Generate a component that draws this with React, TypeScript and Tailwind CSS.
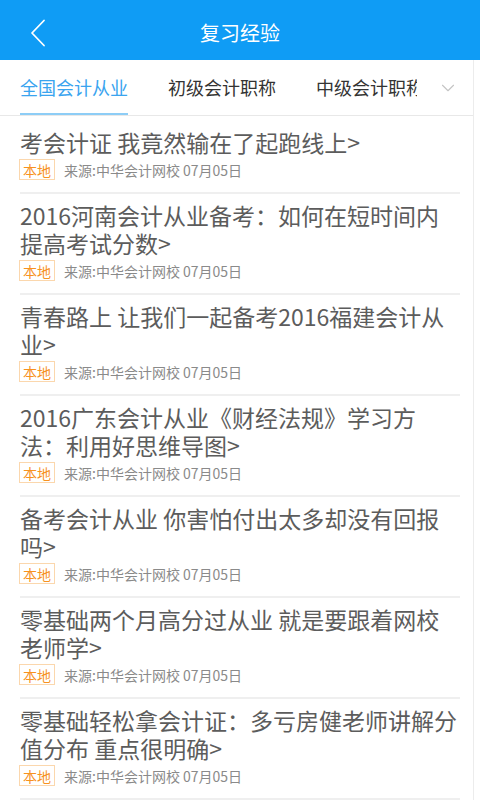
import { ChevronDown } from 'lucide-react'

const TABS = ['全国会计从业', '初级会计职称', '中级会计职称']

const ARTICLES: string[][] = [
  ['考会计证 我竟然输在了起跑线上>'],
  ['2016河南会计从业备考：如何在短时间内', '提高考试分数>'],
  ['青春路上 让我们一起备考2016福建会计从', '业>'],
  ['2016广东会计从业《财经法规》学习方', '法：利用好思维导图>'],
  ['备考会计从业 你害怕付出太多却没有回报', '吗>'],
  ['零基础两个月高分过从业 就是要跟着网校', '老师学>'],
  ['零基础轻松拿会计证：多亏房健老师讲解分', '值分布 重点很明确>'],
]

export default function App() {
  return (
    <div
      className="w-[480px] h-[800px] overflow-hidden bg-white flex flex-col"
      style={{ fontFamily: '"Noto Sans CJK SC", "Noto Sans", sans-serif' }}
    >
      {/* Header */}
      <div className="h-[60px] flex-shrink-0 bg-[#0f9cf5] flex items-center relative pt-[6px]">
        <button className="w-[60px] h-full flex items-center pl-[30px] text-white" aria-label="返回">
          <svg width="16" height="28" viewBox="0 0 16 28" fill="none" stroke="currentColor" strokeWidth="1.8" strokeLinecap="round" strokeLinejoin="round">
            <path d="M14 1.5L2 14l12 12.5" />
          </svg>
        </button>
        <h1 className="absolute left-1/2 -translate-x-1/2 text-white text-[20px] leading-none">复习经验</h1>
      </div>

      <div className="flex-1 flex min-h-0">
        <div className="w-[474px] border-r border-[#ececec] flex flex-col min-h-0">
          {/* Tabs */}
          <div className="h-[56px] flex-shrink-0 flex border-b border-[#e8e8e8]">
            <div className="flex-1 overflow-hidden flex pl-[20px] gap-[40px] whitespace-nowrap">
              {TABS.map((t, i) => (
                <div
                  key={t}
                  className={
                    i === 0
                      ? 'h-full flex items-center text-[18px] text-[#3aa4ef] border-b-2 border-[#8dcdf6] pt-[2px] flex-shrink-0'
                      : 'h-full flex items-center text-[18px] text-[#333] flex-shrink-0'
                  }
                >
                  {t}
                </div>
              ))}
            </div>
            <div className="w-[56px] flex items-center pl-[20px] text-[#c4c4c4]">
              <ChevronDown className="w-[22px] h-[22px]" strokeWidth={1.2} />
            </div>
          </div>

          {/* List */}
          <div className="flex-1 overflow-hidden pt-[5px]">
            {ARTICLES.map((lines, i) => (
              <div key={i} className="mx-[20px] w-[440px] pt-[7px] pb-[12px] border-b-2 border-[#efefef]">
                <div className="text-[23px] leading-[28px] text-[#5c5c5c]">
                  {lines.map(l => (
                    <div key={l} className="whitespace-nowrap">{l}</div>
                  ))}
                </div>
                <div className="mt-[3px] flex items-center h-[21px]">
                  <span className="h-[21px] px-[3px] flex items-center border border-[#fbd7ad] text-[#f7921f] text-[14px] leading-none -ml-[1px]">
                    本地
                  </span>
                  <span className="ml-[9px] text-[14px] text-[#8a8a8a] leading-none">来源:中华会计网校 07月05日</span>
                </div>
              </div>
            ))}
          </div>
        </div>
        <div className="flex-1" />
      </div>
    </div>
  )
}
